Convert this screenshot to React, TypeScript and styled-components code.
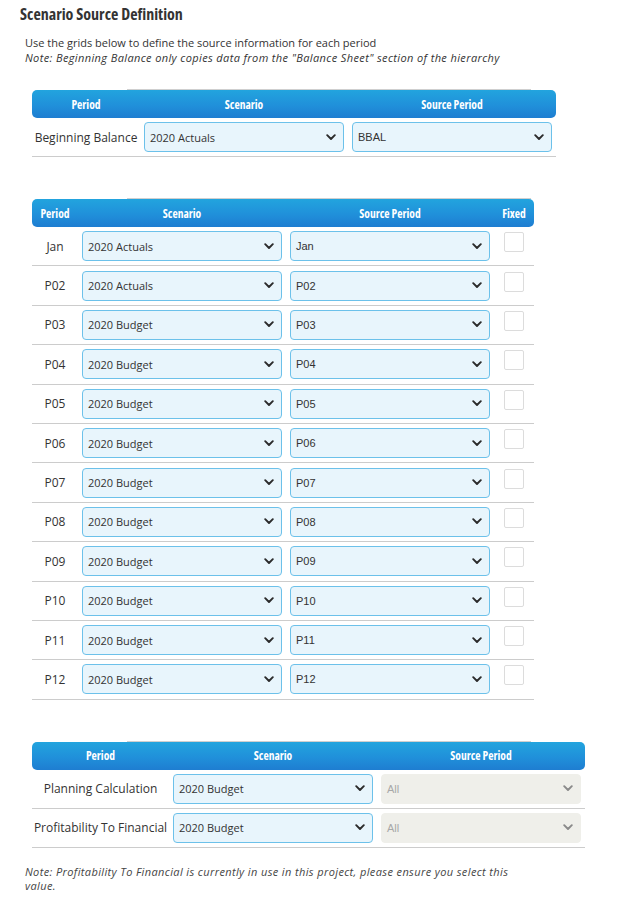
import React from "react";
import styled, { createGlobalStyle } from "styled-components";

const GlobalStyle = createGlobalStyle`
	html, body {
		margin: 0;
		padding: 0;
		background: #fff;
	}
	body {
		font-family: "Open Sans", "Liberation Sans", sans-serif;
		color: #333;
	}
`;

type Period = { name: string; scenario: string };

const periods: Period[] = [
	{ name: "Jan", scenario: "2020 Actuals" },
	{ name: "P02", scenario: "2020 Actuals" },
	{ name: "P03", scenario: "2020 Budget" },
	{ name: "P04", scenario: "2020 Budget" },
	{ name: "P05", scenario: "2020 Budget" },
	{ name: "P06", scenario: "2020 Budget" },
	{ name: "P07", scenario: "2020 Budget" },
	{ name: "P08", scenario: "2020 Budget" },
	{ name: "P09", scenario: "2020 Budget" },
	{ name: "P10", scenario: "2020 Budget" },
	{ name: "P11", scenario: "2020 Budget" },
	{ name: "P12", scenario: "2020 Budget" },
];

const Chevron = ({ disabled }: { disabled?: boolean }) => (
	<svg width='10' height='7' viewBox='0 0 10 7'>
		<path
			d='M1.2 1.2 L5 5 L8.8 1.2'
			fill='none'
			stroke={disabled ? "#8a8a8a" : "#2b2b2b"}
			strokeWidth='1.9'
			strokeLinecap='round'
			strokeLinejoin='round'
		/>
	</svg>
);

const Select = ({ value, mono, disabled }: { value: string; mono?: boolean; disabled?: boolean }) => (
	<SelectBox $disabled={disabled}>
		<SelectText $mono={mono} $disabled={disabled}>
			{value}
		</SelectText>
		<Chevron disabled={disabled} />
	</SelectBox>
);

export default function App() {
	return (
		<Page>
			<GlobalStyle />
			<Title>Scenario Source Definition</Title>
			<Intro>
				<div>Use the grids below to define the source information for each period</div>
				<em>Note: Beginning Balance only copies data from the "Balance Sheet" section of the hierarchy</em>
			</Intro>

			<Grid $cols='108px 208px 208px'>
				<Header>
					<HeadCell>Period</HeadCell>
					<HeadCell>Scenario</HeadCell>
					<HeadCell>Source Period</HeadCell>
				</Header>
				<Row>
					<Label>Beginning Balance</Label>
					<Cell>
						<Select value='2020 Actuals' />
					</Cell>
					<Cell>
						<Select value='BBAL' mono />
					</Cell>
				</Row>
			</Grid>

			<Grid $cols='46px 208px 208px 40px' $rowHeight='39.4px'>
				<Header>
					<HeadCell>Period</HeadCell>
					<HeadCell>Scenario</HeadCell>
					<HeadCell>Source Period</HeadCell>
					<HeadCell>Fixed</HeadCell>
				</Header>
				{periods.map((p) => (
					<Row key={p.name}>
						<Label>{p.name}</Label>
						<Cell>
							<Select value={p.scenario} />
						</Cell>
						<Cell>
							<Select value={p.name} mono />
						</Cell>
						<Cell>
							<Checkbox />
						</Cell>
					</Row>
				))}
			</Grid>

			<Grid $cols='137px 208px 208px'>
				<Header>
					<HeadCell>Period</HeadCell>
					<HeadCell>Scenario</HeadCell>
					<HeadCell>Source Period</HeadCell>
				</Header>
				<Row>
					<Label>Planning Calculation</Label>
					<Cell>
						<Select value='2020 Budget' />
					</Cell>
					<Cell>
						<Select value='All' mono disabled />
					</Cell>
				</Row>
				<Row>
					<Label>Profitability To Financial</Label>
					<Cell>
						<Select value='2020 Budget' />
					</Cell>
					<Cell>
						<Select value='All' mono disabled />
					</Cell>
				</Row>
			</Grid>

			<Note>
				Note: Profitability To Financial is currently in use in this project, please ensure you select this value.
			</Note>
		</Page>
	);
}

const Page = styled.div`
	display: flex;
	flex-direction: column;
	align-items: flex-start;
	padding: 3px 0 0 20px;
	width: 625px;
	box-sizing: border-box;
`;

const Title = styled.h1`
	margin: 0;
	font-size: 16px;
	line-height: 22px;
	font-weight: 700;
	font-stretch: 75%;
	color: #333;
`;

const Intro = styled.div`
	margin: 10px 0 0 5px;
	font-size: 11px;
	line-height: 15px;
	color: #333;

	em {
		display: block;
		letter-spacing: 0.38px;
	}
`;

const Grid = styled.div<{ $cols: string; $rowHeight?: string }>`
	--cols: ${(p) => p.$cols};
	--row-h: ${(p) => p.$rowHeight ?? "39px"};
	position: relative;
	margin: 25px 0 0 12px;
	display: flex;
	flex-direction: column;

	& + & {
		margin-top: 42px;
	}

	&::before {
		content: "";
		position: absolute;
		top: -1px;
		left: 95px;
		width: 404px;
		height: 1px;
		background: #cfcfcf;
	}
`;

const Header = styled.div`
	display: grid;
	grid-template-columns: var(--cols);
	height: 28px;
	align-items: center;
	border-radius: 5px;
	background: linear-gradient(to bottom, #22a4de 0%, #2090da 55%, #1e7dd1 100%);
`;

const HeadCell = styled.div`
	text-align: center;
	color: #fff;
	font-size: 11.5px;
	font-weight: 700;
	font-stretch: 75%;
`;

const Row = styled.div`
	display: grid;
	grid-template-columns: var(--cols);
	height: var(--row-h);
	box-sizing: border-box;
	align-items: center;
	border-bottom: 1px solid #cccccc;
`;

const Label = styled.div`
	text-align: center;
	font-size: 12px;
	color: #333;
	white-space: nowrap;
`;

const Cell = styled.div`
	display: flex;
	justify-content: center;
	padding: 0 4px;
`;

const SelectBox = styled.div<{ $disabled?: boolean }>`
	flex: 1;
	display: flex;
	align-items: center;
	justify-content: space-between;
	height: 30px;
	box-sizing: border-box;
	padding: 0 7px 0 5px;
	border-radius: 4px;
	border: 1px solid ${(p) => (p.$disabled ? "#efefea" : "#6cc1ea")};
	background: ${(p) => (p.$disabled ? "#efefea" : "#e8f5fc")};
`;

const SelectText = styled.span<{ $mono?: boolean; $disabled?: boolean }>`
	font-family: ${(p) => (p.$mono ? '"Liberation Sans", Arial, sans-serif' : '"Open Sans", sans-serif')};
	font-size: 11px;
	color: ${(p) => (p.$disabled ? "#a8a8a8" : "#333")};
`;

const Checkbox = styled.div`
	width: 20px;
	height: 20px;
	box-sizing: border-box;
	border: 1px solid #dcdcdc;
	border-radius: 2px;
	background: #fff;
	margin-top: -8px;
`;

const Note = styled.p`
	margin: 17px 0 0 5px;
	width: 490px;
	font-size: 11px;
	line-height: 14px;
	font-style: italic;
	letter-spacing: 0.38px;
	color: #444;
`;
